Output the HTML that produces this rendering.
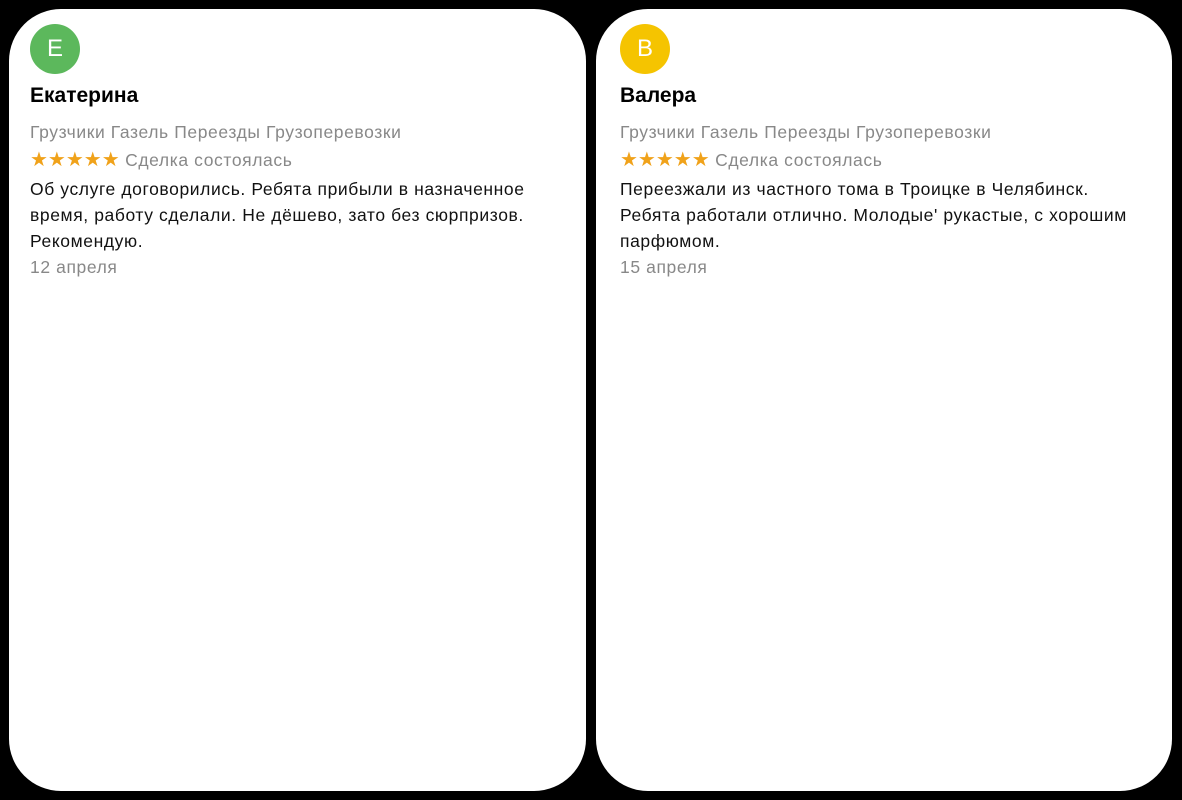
<!DOCTYPE html><html><head><style>
body{margin:0;width:1182px;height:800px;background:#000;position:relative;overflow:hidden;font-family:"Liberation Sans",sans-serif}
.c{position:absolute;top:9px;height:782px;background:#fff;border-radius:52px}
.av{position:absolute;left:21px;top:15px;width:50px;height:50px;border-radius:50%;color:#fff;font-size:24px;line-height:50px;text-align:center}
.n{position:absolute;left:21px;top:75px;font-size:21px;font-weight:bold;color:#000}
.t{position:absolute;left:21px;top:110px;font-size:17.5px;letter-spacing:0.6px;line-height:26px;color:#111;width:560px;white-space:nowrap}
.g{color:#888}
.st{margin-top:2px;margin-bottom:3px}
.s{color:#f0a21a;letter-spacing:0;font-size:20px}
</style></head><body>
<div class="c" style="left:9px;width:577px">
<div class="av" style="background:#5cb85c">Е</div>
<div class="n">Екатерина</div>
<div class="t"><div class="g">Грузчики Газель Переезды Грузоперевозки</div><div class="st"><span class="s">★★★★★</span> <span class="g">Сделка состоялась</span></div>Об услуге договорились. Ребята прибыли в назначенное<br>время, работу сделали. Не дёшево, зато без сюрпризов.<br>Рекомендую.<div class="g">12 апреля</div></div>
</div>
<div class="c" style="left:596px;width:576px">
<div class="av" style="background:#f5c400;left:24px">В</div>
<div class="n" style="left:24px">Валера</div>
<div class="t" style="left:24px"><div class="g">Грузчики Газель Переезды Грузоперевозки</div><div class="st"><span class="s">★★★★★</span> <span class="g">Сделка состоялась</span></div>Переезжали из частного тома в Троицке в Челябинск.<br>Ребята работали отлично. Молодые' рукастые, с хорошим<br>парфюмом.<div class="g">15 апреля</div></div>
</div>
</body></html>
